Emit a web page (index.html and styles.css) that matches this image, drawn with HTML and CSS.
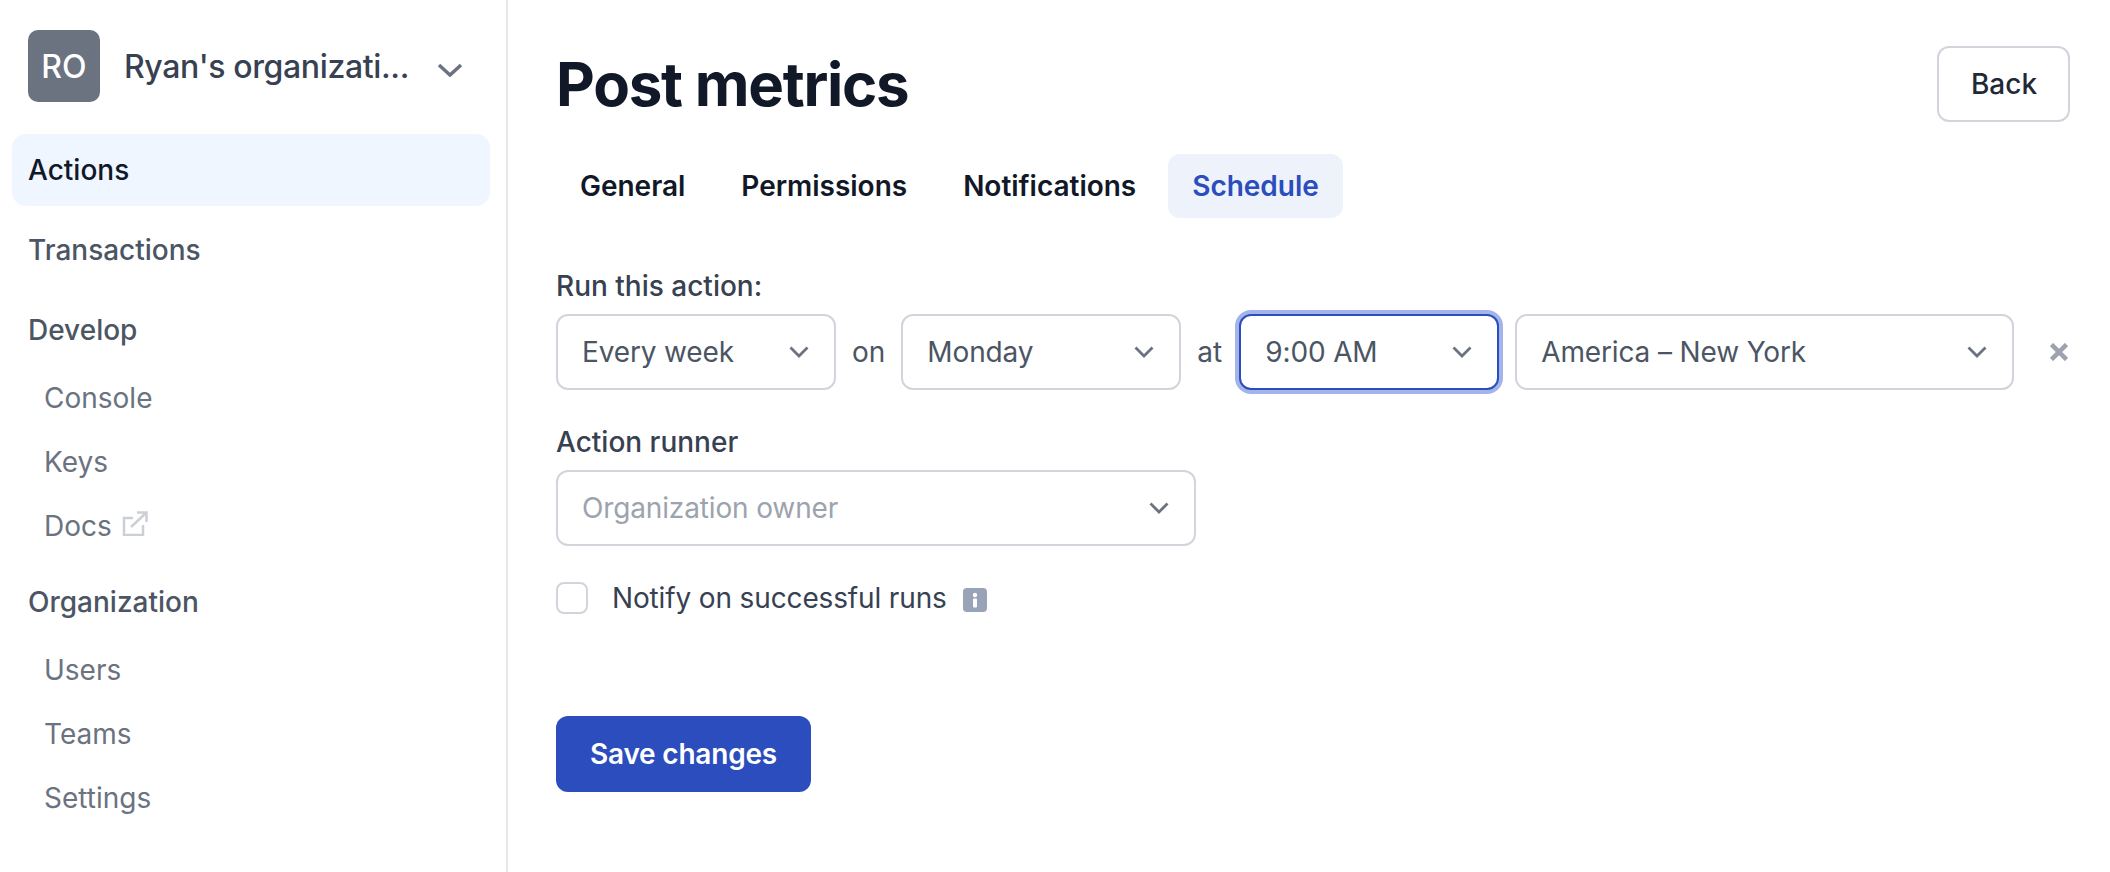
FILE: index.html
```html
<!DOCTYPE html>
<html lang="en">
<head>
<meta charset="utf-8">
<title>Post metrics</title>
<link rel="stylesheet" href="styles.css">
</head>
<body>
<div class="app">
  <aside class="sidebar">
    <div class="org">
      <div class="avatar">RO</div>
      <div class="org-name">Ryan's organizati...</div>
      <svg class="org-chevron" viewBox="0 0 26 14" fill="none"><path d="M2 2l11 10L24 2"/></svg>
    </div>
    <nav class="nav">
      <a class="nav-top active">Actions</a>
      <a class="nav-top">Transactions</a>
      <a class="nav-top">Develop</a>
      <a class="nav-sub">Console</a>
      <a class="nav-sub">Keys</a>
      <a class="nav-sub">Docs
        <svg class="ext" viewBox="0 0 26 25" fill="none"><path d="M11 7H2v17h19V14"/><path d="M9 16L24 2"/><path d="M15 1.500h9.500V11"/></svg>
      </a>
      <a class="nav-top group">Organization</a>
      <a class="nav-sub">Users</a>
      <a class="nav-sub">Teams</a>
      <a class="nav-sub">Settings</a>
    </nav>
  </aside>
  <main class="main">
    <header class="head">
      <h1 class="title">Post metrics</h1>
      <button class="back">Back</button>
    </header>
    <div class="tabs">
      <a class="tab">General</a>
      <a class="tab">Permissions</a>
      <a class="tab">Notifications</a>
      <a class="tab current">Schedule</a>
    </div>
    <label class="label">Run this action:</label>
    <div class="schedule">
      <div class="select w-freq"><span>Every week</span><svg class="chev" viewBox="0 0 20 12" fill="none"><path d="M1.500 1.500L10 10l8.500-8.500"/></svg></div>
      <span class="word">on</span>
      <div class="select w-day"><span>Monday</span><svg class="chev" viewBox="0 0 20 12" fill="none"><path d="M1.500 1.500L10 10l8.500-8.500"/></svg></div>
      <span class="word at">at</span>
      <div class="select w-time focus"><span>9:00 AM</span><svg class="chev" viewBox="0 0 20 12" fill="none"><path d="M1.500 1.500L10 10l8.500-8.500"/></svg></div>
      <div class="select w-zone"><span>America – New York</span><svg class="chev" viewBox="0 0 20 12" fill="none"><path d="M1.500 1.500L10 10l8.500-8.500"/></svg></div>
      <svg class="close" viewBox="0 0 18 18" fill="none"><path d="M1.500 1.500l15 15M16.500 1.500l-15 15"/></svg>
    </div>
    <label class="label runner">Action runner</label>
    <div class="select w-runner placeholder"><span>Organization owner</span><svg class="chev" viewBox="0 0 20 12" fill="none"><path d="M1.500 1.500L10 10l8.500-8.500"/></svg></div>
    <div class="check-row">
      <span class="checkbox"></span>
      <span class="check-text">Notify on successful runs</span>
      <svg class="info" viewBox="0 0 24 24"><rect width="24" height="24" rx="4" fill="#98a3b8"/><circle cx="12" cy="7" r="2.200" fill="#fff"/><rect x="10" y="10.500" width="4" height="9" rx="1" fill="#fff"/></svg>
    </div>
    <button class="save">Save changes</button>
  </main>
</div>
</body>
</html>
```
FILE: styles.css
```css
* { box-sizing: border-box; }
html, body { margin: 0; padding: 0; height: 100%; background: #fff; }
body { font-family: Inter, "Liberation Sans", sans-serif; font-size: 28px; color: #374151; overflow: hidden; }
.app { display: flex; height: 872px; }

.sidebar { width: 508px; flex: none; border-right: 2px solid #e5e7eb; padding: 30px 16px 0 12px; }
.org { display: flex; align-items: center; height: 72px; padding-left: 16px; }
.avatar { width: 72px; height: 72px; flex: none; border-radius: 10px; background: #6b7280; color: #fff; display: flex; align-items: center; justify-content: center; font-size: 32px; font-weight: 500; }
.org-name { margin-left: 24px; width: 285px; white-space: nowrap; font-size: 32px; font-weight: 500; letter-spacing: -0.37px; color: #374151; }
.org-chevron { width: 26px; height: 14px; margin: 7px 0 0 28px; stroke: #6b7280; stroke-width: 3.500; }

.nav { display: flex; flex-direction: column; margin-top: 32px; }
.nav-top { display: flex; align-items: center; height: 72px; padding-left: 16px; font-weight: 500; color: #4b5563; border-radius: 14px; margin-bottom: 8px; width: 478px; }
.nav-top.active { background: #eff6ff; color: #111827; }
.nav-top:nth-child(3) { margin-bottom: 0; }
.nav-top.group { margin-top: 8px; margin-bottom: 0; }
.nav-sub { display: flex; align-items: center; height: 64px; padding-left: 32px; color: #6b7280; }
.ext { width: 26px; height: 25px; margin: -6px 0 0 10px; stroke: #cbcfd6; stroke-width: 2.500; }

.main { flex: 1; padding: 46px 40px 0 48px; display: flex; flex-direction: column; align-items: flex-start; }
.head { width: 100%; display: flex; justify-content: space-between; align-items: center; height: 76px; }
.title { margin: 0; font-size: 60px; font-weight: 700; letter-spacing: -1.250px; color: #111827; line-height: 76px; }
.back { width: 133px; height: 76px; border: 2px solid #d1d5db; border-radius: 12px; background: #fff; font: 500 28px Inter, sans-serif; color: #1f2937; padding: 0 0 0 1px; }

.tabs { display: flex; gap: 8px; margin-top: 32px; }
.tab { display: flex; align-items: center; height: 64px; padding: 0 24px; border-radius: 12px; font-weight: 600; color: #111827; letter-spacing: -0.02px; }
.tab.current { background: #eef2fb; color: #2b4dbd; }

.label { display: block; height: 40px; line-height: 40px; margin-top: 48px; margin-bottom: 8px; font-weight: 500; color: #374151; }
.label.runner { margin-top: 32px; }

.schedule { display: flex; align-items: center; gap: 16px; width: 100%; }
.word { color: #4b5563; }
.word.at { margin-right: 1px; }
.select { display: flex; align-items: center; justify-content: space-between; height: 76px; padding: 0 25px 0 24px; border: 2px solid #d1d5db; border-radius: 12px; background: #fff; color: #4b5563; letter-spacing: -0.14px; }
.select.focus { border-color: #2b4dbd; box-shadow: 0 0 0 4px #a3b4ea; }
.chev { width: 20px; height: 12px; stroke: #6b7280; stroke-width: 2.800; flex: none; }
.w-freq, .w-day { width: 280px; }
.w-time { width: 260px; }
.w-zone { width: 499px; }
.w-runner { width: 640px; }
.placeholder { color: #9ca3af; }
.close { width: 18px; height: 18px; margin-left: 20px; stroke: #9ca3af; stroke-width: 4.500; flex: none; }

.check-row { display: flex; align-items: center; height: 32px; margin-top: 36px; }
.checkbox { width: 32px; height: 32px; border: 2px solid #d1d5db; border-radius: 8px; background: #fff; }
.check-text { margin-left: 24px; color: #374151; letter-spacing: -0.14px; }
.info { width: 24px; height: 24px; margin: 4px 0 0 16px; }

.save { margin-top: 102px; height: 76px; width: 255px; border: none; border-radius: 12px; background: #2b4dbd; color: #fff; font: 600 28px Inter, sans-serif; letter-spacing: -0.2px; padding: 0; }
```
